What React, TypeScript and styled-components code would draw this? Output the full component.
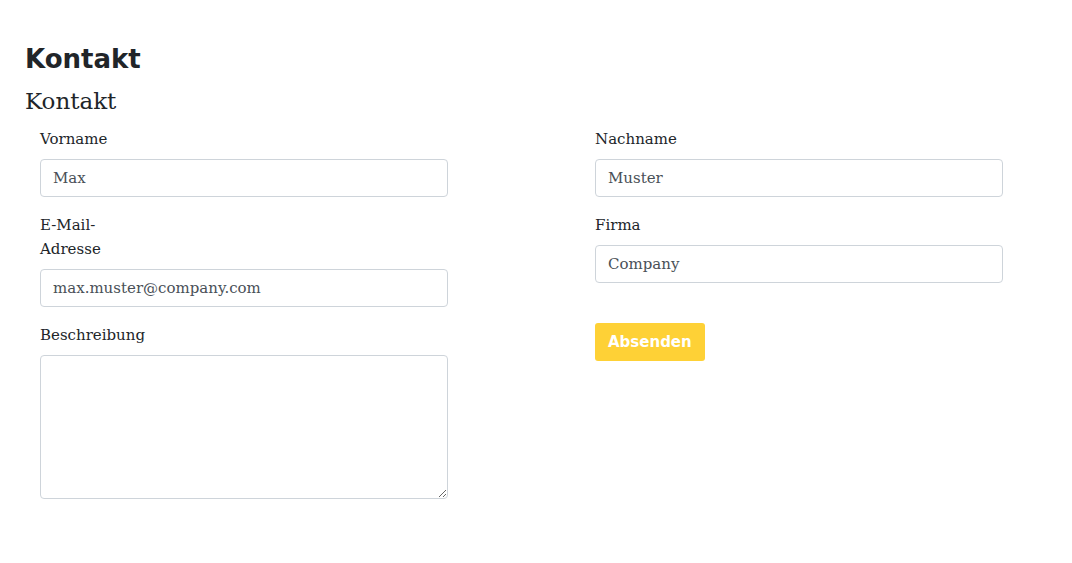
import styled, { createGlobalStyle } from "styled-components";

const GlobalStyle = createGlobalStyle`
	body{
		margin: 0;
		background: #fff;
		color: #212529;
		font-family: "DejaVu Serif", "Liberation Serif", serif;
	}
`;

const Page = styled.div`
	padding: 42px 0 0 25px;
`;

const Title = styled.h1`
	margin: 0;
	font-family: "DejaVu Sans", sans-serif;
	font-size: 26px;
	line-height: 34px;
	font-weight: bold;
	color: #212529;
`;

const SubTitle = styled.h2`
	margin: 11px 0 0;
	font-size: 23px;
	line-height: 29px;
	font-weight: 400;
	color: #212529;
`;

const Row = styled.form`
	display: grid;
	grid-template-columns: 555px 1fr;
	margin-top: 11px;
`;

const Column = styled.div`
	padding: 0 15px;
	display: flex;
	flex-direction: column;
	gap: 16px;
`;

const Group = styled.div`
	display: flex;
	flex-direction: column;
	align-items: flex-start;
`;

const Label = styled.label<{ narrow?: boolean }>`
	font-size: 15px;
	line-height: 24px;
	margin-bottom: 8px;
	max-width: ${props => props.narrow ? "80px" : "none"};
`;

const Input = styled.input`
	width: 408px;
	height: 38px;
	box-sizing: border-box;
	padding: 6px 12px;
	border: 1px solid #ced4da;
	border-radius: 4px;
	font-family: inherit;
	font-size: 15px;
	color: #495057;
	background: #fff;
	outline: none;
`;

const TextArea = styled.textarea`
	width: 408px;
	height: 144px;
	box-sizing: border-box;
	padding: 6px 12px;
	border: 1px solid #ced4da;
	border-radius: 4px;
	font-family: inherit;
	font-size: 15px;
	color: #495057;
	outline: none;
`;

const Button = styled.button`
	margin-top: 24px;
	height: 38px;
	padding: 0 13px;
	border: none;
	border-radius: 3px;
	background: #fed136;
	color: #fff;
	font-family: "DejaVu Sans", sans-serif;
	font-weight: bold;
	font-size: 15px;
	cursor: pointer;
`;

const fields = {
	vorname: "Max",
	nachname: "Muster",
	email: "max.muster@company.com",
	firma: "Company",
};

function App(){
	return(
		<>
			<GlobalStyle/>
			<Page>
				<Title>Kontakt</Title>
				<SubTitle>Kontakt</SubTitle>
				<Row onSubmit={e=>e.preventDefault()}>
					<Column>
						<Group>
							<Label htmlFor="vorname">Vorname</Label>
							<Input id="vorname" defaultValue={fields.vorname}/>
						</Group>
						<Group>
							<Label htmlFor="email" narrow>E-Mail-Adresse</Label>
							<Input id="email" type="email" defaultValue={fields.email}/>
						</Group>
						<Group>
							<Label htmlFor="beschreibung">Beschreibung</Label>
							<TextArea id="beschreibung"/>
						</Group>
					</Column>
					<Column>
						<Group>
							<Label htmlFor="nachname">Nachname</Label>
							<Input id="nachname" defaultValue={fields.nachname}/>
						</Group>
						<Group>
							<Label htmlFor="firma">Firma</Label>
							<Input id="firma" defaultValue={fields.firma}/>
						</Group>
						<Group>
							<Button type="submit">Absenden</Button>
						</Group>
					</Column>
				</Row>
			</Page>
		</>
	)
}

export default App;
